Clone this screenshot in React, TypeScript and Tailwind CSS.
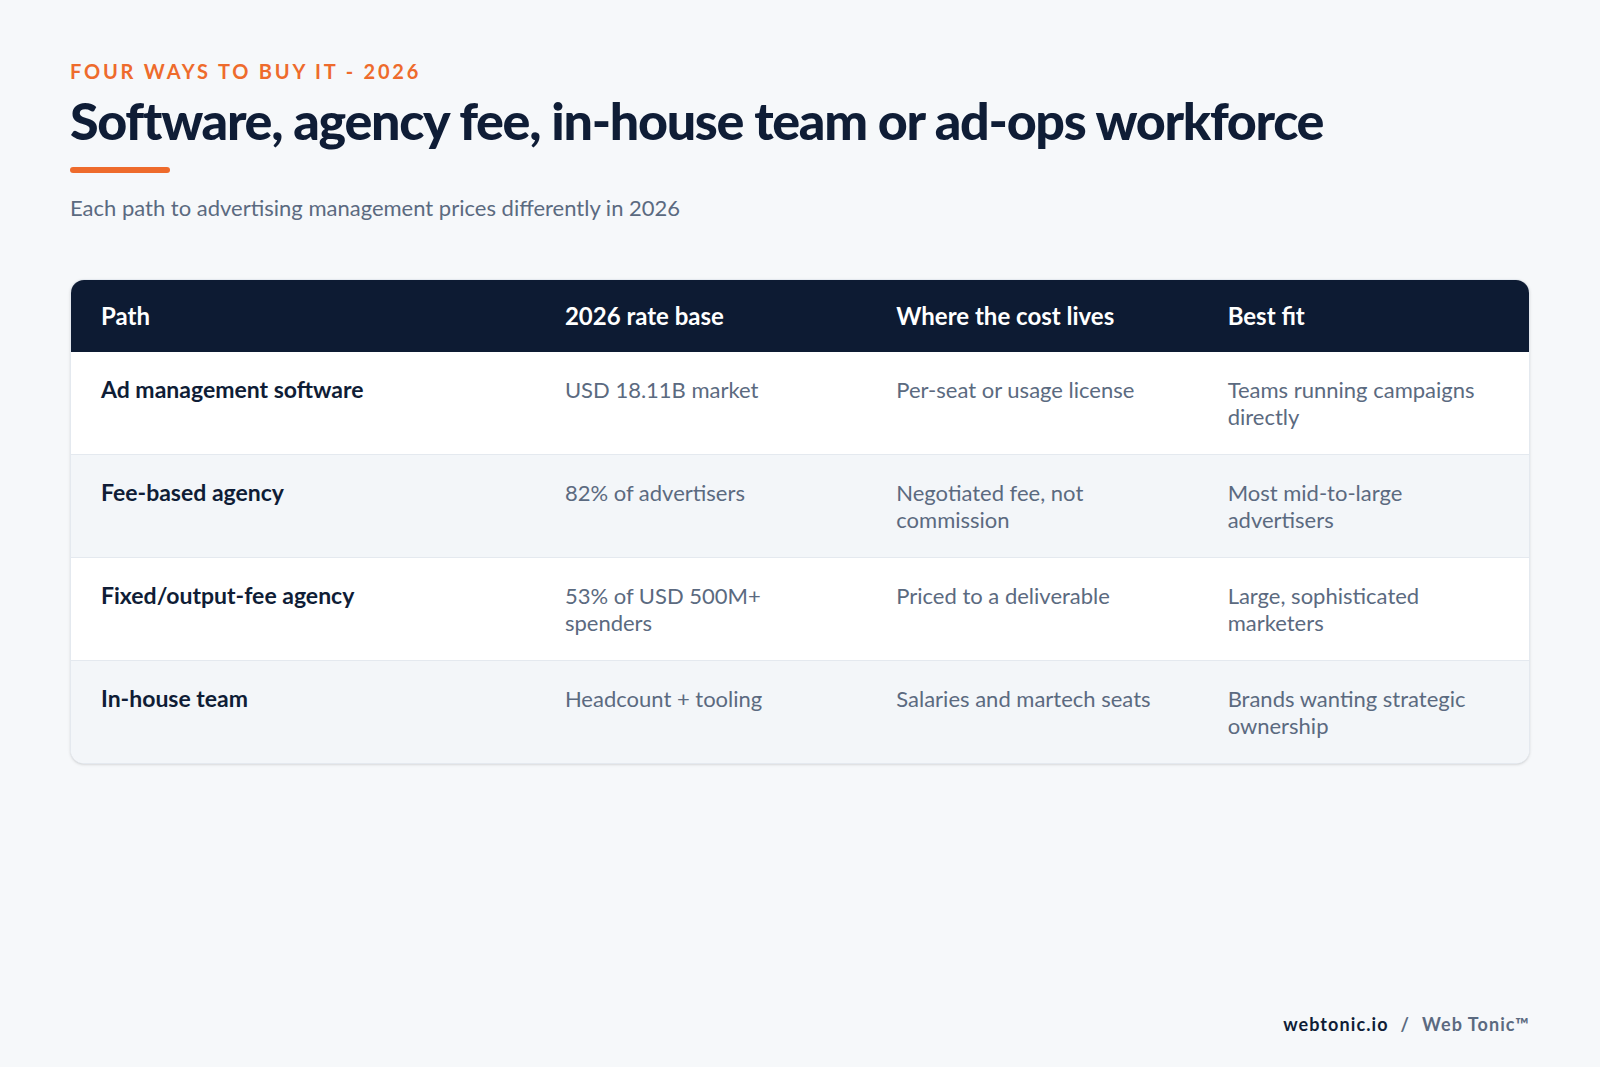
type Row = { path: string; rate: string; cost: string; fit: string };

const rows: Row[] = [
  { path: 'Ad management software', rate: 'USD 18.11B market', cost: 'Per-seat or usage license', fit: 'Teams running campaigns directly' },
  { path: 'Fee-based agency', rate: '82% of advertisers', cost: 'Negotiated fee, not commission', fit: 'Most mid-to-large advertisers' },
  { path: 'Fixed/output-fee agency', rate: '53% of USD 500M+ spenders', cost: 'Priced to a deliverable', fit: 'Large, sophisticated marketers' },
  { path: 'In-house team', rate: 'Headcount + tooling', cost: 'Salaries and martech seats', fit: 'Brands wanting strategic ownership' },
];

const cols = 'grid grid-cols-[1.4fr_1fr_1fr_1fr]';

export default function App() {
  return (
    <div className="flex h-[1067px] flex-col bg-[#f6f8fa] px-[70px] pt-[59px] font-[Lato,sans-serif]">
      <p className="text-[20px] leading-[24px] font-bold tracking-[0.14em] text-[#ee6b2c]">FOUR WAYS TO BUY IT - 2026</p>
      <h1 className="mt-[6px] text-[52px] leading-[62px] font-black tracking-[-0.025em] text-[#0f1d36]">
        Software, agency fee, in-house team or ad-ops workforce
      </h1>
      <div className="mt-[16px] h-[6px] w-[100px] rounded-full bg-[#ee6b2c]" />
      <p className="mt-[22px] text-[22px] leading-[26px] text-[#5b6a80]">
        Each path to advertising management prices differently in 2026
      </p>

      {/* Table */}
      <div className="mt-[58px] overflow-hidden rounded-[14px] border border-[#e4e9ef] bg-white shadow-sm">
        <div className={`${cols} h-[72px] items-center bg-[#0d1b33] text-[24px] font-bold text-white`}>
          <div className="px-[30px]">Path</div>
          <div className="px-[30px]">2026 rate base</div>
          <div className="px-[30px]">Where the cost lives</div>
          <div className="px-[30px]">Best fit</div>
        </div>
        {rows.map((r, i) => (
          <div
            key={r.path}
            className={`${cols} py-6 text-[22px] leading-[27px] ${i % 2 === 1 ? 'bg-[#f3f6f9]' : 'bg-white'} ${i > 0 ? 'border-t border-[#e4e9ef]' : ''}`}
          >
            <div className="px-[30px] text-[23px] font-bold text-[#0f1d36]">{r.path}</div>
            <div className="px-[30px] text-[#5b6a80]">{r.rate}</div>
            <div className="px-[30px] text-[#5b6a80]">{r.cost}</div>
            <div className="px-[30px] text-[#5b6a80]">{r.fit}</div>
          </div>
        ))}
      </div>

      <div className="mt-auto flex justify-end pb-[32px] text-[18px] leading-[22px] font-bold tracking-[0.06em]">
        <span className="text-[#0f1d36]">webtonic.io</span>
        <span className="mx-[12px] text-[#5b6a80]">/</span>
        <span className="text-[#5b6a80]">Web Tonic™</span>
      </div>
    </div>
  );
}
